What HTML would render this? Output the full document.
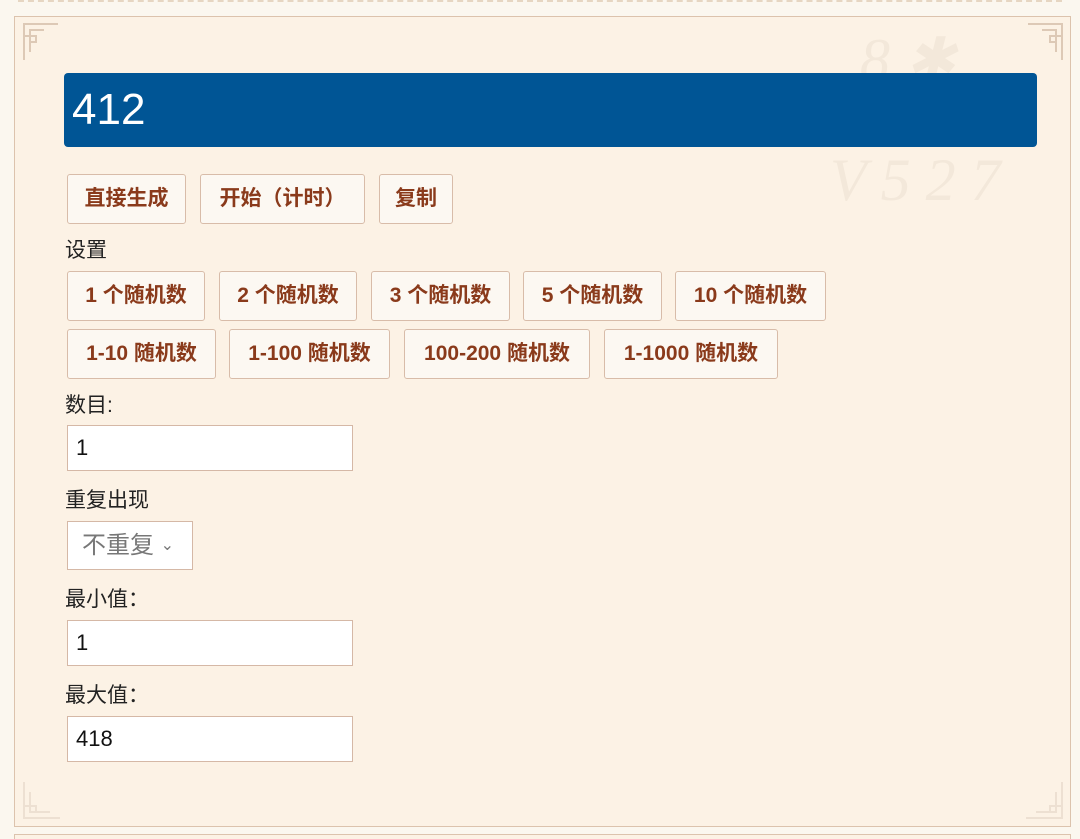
<!DOCTYPE html><html><head><meta charset="utf-8"><style>
html,body{margin:0;width:1080px;height:839px;overflow:hidden}
body{background:#fbf7ef;font-family:"Liberation Sans","Noto Sans CJK SC",sans-serif;position:relative}
.dash{position:absolute;left:18px;right:18px;top:0;border-top:2px dashed #e6d6c2}
.box{position:absolute;left:14px;top:16px;width:1055px;height:809px;background:#fcf2e5;border:1px solid #dcc3ad}
.box2{position:absolute;left:14px;top:834px;width:1055px;height:4px;background:#fcf2e5;border:1px solid #dcc3ad;border-bottom:none}
.res{position:absolute;left:64px;top:73px;width:973px;height:74px;background:#005595;border-radius:4px;color:#fff;font-size:44px;line-height:74px;padding-left:8px;box-sizing:border-box}
.b{position:absolute;height:50px;box-sizing:border-box;background:#fcf8f2;border:1px solid #d8bca9;border-radius:3px;color:#8a3a1b;font-weight:bold;font-size:21px;line-height:48px;text-align:center;white-space:nowrap}
.l{position:absolute;left:65px;font-size:21px;color:#222}
.in{position:absolute;left:67px;width:286px;height:46px;box-sizing:border-box;background:#fff;border:1px solid #d5b8a6;font-size:22px;line-height:44px;padding-left:8px;color:#111}
</style></head><body>
<div class="dash"></div>
<div class="box"></div><div class="box2"></div>
<svg style="position:absolute;left:22px;top:22px" width="40" height="40" fill="none" stroke="#ddc9b6" stroke-width="2"><path d="M2 38V2h34M8 30V8h14M2 14h12v6H8"/></svg>
<svg style="position:absolute;left:1024px;top:22px" width="40" height="40" fill="none" stroke="#ddc9b6" stroke-width="2"><path d="M38 38V2H4M32 30V8H18M38 14H26v6h6"/></svg>
<svg style="position:absolute;left:22px;top:780px" width="40" height="40" fill="none" stroke="#ede0d2" stroke-width="2"><path d="M2 2v36h36M8 12v20h20M2 26h12v6"/></svg>
<svg style="position:absolute;left:1024px;top:780px" width="40" height="40" fill="none" stroke="#ede0d2" stroke-width="2"><path d="M38 2v36H2M32 12v20H12M38 26H26v6"/></svg>
<div style="position:absolute;left:830px;top:30px;width:230px;height:230px;color:#f3e8da;font-size:60px;font-family:'Liberation Serif',serif;font-style:italic;line-height:60px">&nbsp;&nbsp;8 ✱<br>9 &nbsp;3<br>V 5 2 7</div>
<div class="res">412</div>
<div class="b" style="left:67px;top:174px;width:119px">直接生成</div>
<div class="b" style="left:200px;top:174px;width:165px">开始（计时）</div>
<div class="b" style="left:379px;top:174px;width:74px">复制</div>
<div class="l" style="top:234px">设置</div>
<div class="b" style="left:67px;top:271px;width:138px">1 个随机数</div>
<div class="b" style="left:219px;top:271px;width:138px">2 个随机数</div>
<div class="b" style="left:371px;top:271px;width:139px">3 个随机数</div>
<div class="b" style="left:523px;top:271px;width:139px">5 个随机数</div>
<div class="b" style="left:675px;top:271px;width:151px">10 个随机数</div>
<div class="b" style="left:67px;top:329px;width:149px">1-10 随机数</div>
<div class="b" style="left:229px;top:329px;width:161px">1-100 随机数</div>
<div class="b" style="left:404px;top:329px;width:186px">100-200 随机数</div>
<div class="b" style="left:604px;top:329px;width:174px">1-1000 随机数</div>
<div class="l" style="top:389px">数目:</div>
<div class="in" style="top:425px">1</div>
<div class="l" style="top:484px">重复出现</div>
<div class="in" style="top:521px;width:126px;height:49px;color:#777;font-size:24px;line-height:47px;padding-left:14px">不重复 <span style="font-size:16px;position:relative;top:-3px">⌄</span></div>
<div class="l" style="top:583px">最小值：</div>
<div class="in" style="top:620px">1</div>
<div class="l" style="top:679px">最大值：</div>
<div class="in" style="top:716px">418</div>
</body></html>
